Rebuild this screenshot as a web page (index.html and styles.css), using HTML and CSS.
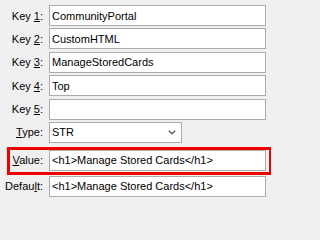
FILE: index.html
```html
<!DOCTYPE html>
<html>
<head>
<meta charset="utf-8">
<link rel="stylesheet" href="styles.css">
</head>
<body>
<div class="form">
  <div class="row"><label class="lbl">Key <u>1</u>:</label><input class="field" type="text" value="CommunityPortal"></div>
  <div class="row"><label class="lbl">Key <u>2</u>:</label><input class="field" type="text" value="CustomHTML"></div>
  <div class="row"><label class="lbl">Key <u>3</u>:</label><input class="field" type="text" value="ManageStoredCards"></div>
  <div class="row"><label class="lbl">Key <u>4</u>:</label><input class="field" type="text" value="Top"></div>
  <div class="row"><label class="lbl">Key <u>5</u>:</label><input class="field" type="text" value=""></div>
  <div class="row"><label class="lbl"><u>T</u>ype:</label>
    <div class="combo"><span class="combo-text">STR</span>
      <svg class="chev" width="8" height="5" viewBox="0 0 8 5"><path d="M0.8 0.8 L4 3.8 L7.2 0.8" fill="none" stroke="#5f5f5f" stroke-width="1.5"/></svg>
    </div>
  </div>
  <div class="row hl"><label class="lbl lbl-hl"><u>V</u>alue:</label><input class="field" type="text" value="&lt;h1&gt;Manage Stored Cards&lt;/h1&gt;"></div>
  <div class="row last"><label class="lbl">Defau<u>l</u>t:</label><input class="field" type="text" value="&lt;h1&gt;Manage Stored Cards&lt;/h1&gt;"></div>
</div>
</body>
</html>
```
FILE: styles.css
```css
html, body {
  margin: 0;
  padding: 0;
  background: #f0f0f0;
}
body {
  width: 271px;
  height: 202px;
  overflow: hidden;
  font-family: "Liberation Sans", Arial, sans-serif;
  font-size: 11px;
  color: #000;
}
.form {
  padding-top: 5px;
  display: flex;
  flex-direction: column;
  gap: 2.4px;
}
.row {
  display: flex;
  align-items: center;
  height: 21px;
}
.lbl {
  width: 43px;
  margin-right: 6px;
  text-align: right;
  white-space: nowrap;
  flex: none;
}
.field {
  box-sizing: border-box;
  width: 217px;
  height: 21px;
  margin: 0;
  padding: 0 2px;
  border: 1px solid #acacac;
  background: #fff;
  font-family: "Liberation Sans", Arial, sans-serif;
  font-size: 11px;
  color: #000;
  outline: none;
  flex: none;
}
.combo {
  box-sizing: border-box;
  width: 133px;
  height: 21px;
  border: 1px solid #acacac;
  background: #fff;
  display: flex;
  align-items: center;
  justify-content: space-between;
  padding: 0 5px 0 2px;
}
.chev {
  display: block;
  margin-top: 1px;
}
.row.hl {
  box-sizing: content-box;
  height: 21px;
  margin-top: 1.6px;
  margin-left: 7px;
  width: 259px;
  border: 3px solid #ee0000;
  padding-bottom: 1px;
  align-items: flex-start;
}
.lbl-hl {
  width: 33px;
  line-height: 21px;
}
.row.last {
  margin-top: -1.4px;
}
```
